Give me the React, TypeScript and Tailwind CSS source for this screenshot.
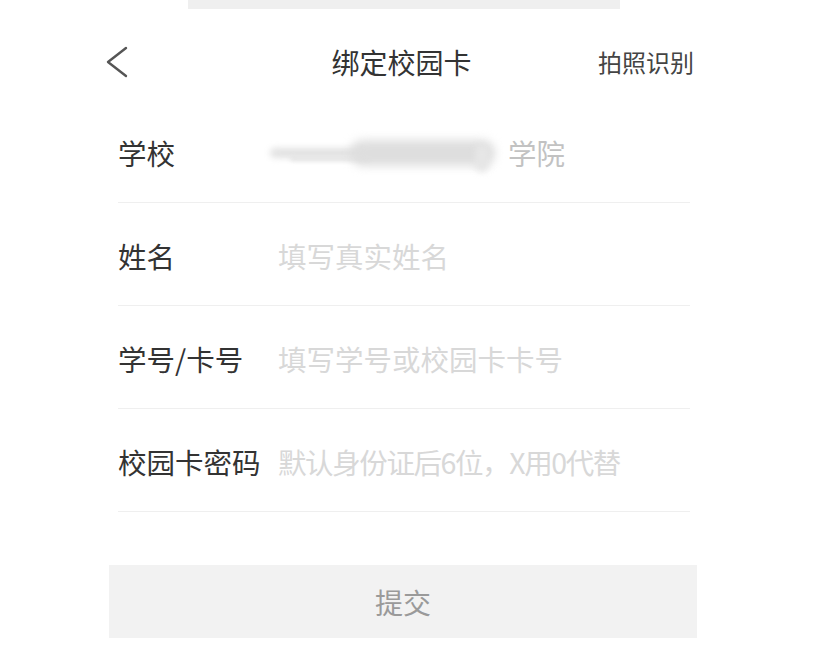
const rows = [
  { label: '学校', placeholder: '', tight: false },
  { label: '姓名', placeholder: '填写真实姓名', tight: false },
  { label: '学号/卡号', placeholder: '填写学号或校园卡卡号', tight: false },
  { label: '校园卡密码', placeholder: '默认身份证后6位，X用0代替', tight: true },
];

function BackArrow() {
  return (
    <svg width="24" height="32" viewBox="0 0 24 32" className="-ml-[1px]">
      <polyline
        points="21,2 3,16 21,30"
        fill="none"
        stroke="#555"
        strokeWidth="2.4"
        strokeLinecap="round"
        strokeLinejoin="round"
      />
    </svg>
  );
}

export default function App() {
  return (
    <div
      className="min-h-[658px] w-[831px] bg-white"
      style={{ fontFamily: '"Noto Sans CJK SC", "Noto Sans", sans-serif' }}
    >
      {/* status strip */}
      <div className="ml-[188px] h-[9px] w-[432px] bg-[#efefef]" />

      <div className="ml-[106px] w-[591px]">
        {/* header */}
        <div className="relative mt-[31px] flex h-[44px] items-center justify-between">
          <BackArrow />
          <h1 className="absolute left-1/2 -translate-x-1/2 text-[28px] text-[#333]">绑定校园卡</h1>
          <span className="mr-[3px] text-[24px] text-[#444]">拍照识别</span>
        </div>

        {/* form */}
        <div className="mt-[16px] pl-[12px] pr-[7px]">
          {rows.map((row, i) => (
            <div
              key={row.label}
              className="flex h-[103px] items-center border-b border-[#efefef] pt-[5px]"
            >
              <span className="w-[160px] shrink-0 text-[28.5px] text-[#333]">{row.label}</span>
              {i === 0 ? (
                <div className="-ml-[8px] flex items-center">
                  {/* redacted school name */}
                  <div className="relative h-[40px] w-[238px]">
                    <div className="absolute left-[0px] top-[14px] h-[10px] w-[110px] rounded-full bg-[#e2e2e2] blur-[3px]" />
                    <div className="absolute left-[20px] top-[22px] h-[5px] w-[80px] rounded-full bg-[#e4e4e4] blur-[2px]" />
                    <div className="absolute left-[80px] top-[6px] h-[26px] w-[145px] rounded-full bg-[#dedede] blur-[5px]" />
                    <div className="absolute left-[205px] top-[10px] h-[28px] w-[14px] rounded-full bg-[#e6e6e6] blur-[3px]" />
                  </div>
                  <span className="text-[28.5px] text-[#c2c2c2]">学院</span>
                </div>
              ) : (
                <span
                  className={
                    row.tight
                      ? 'whitespace-nowrap text-[28.5px] tracking-[-1.4px] text-[#d8d8d8]'
                      : 'whitespace-nowrap text-[28.5px] text-[#d8d8d8]'
                  }
                >
                  {row.placeholder}
                </span>
              )}
            </div>
          ))}
        </div>

        {/* submit */}
        <button className="ml-[3px] mt-[53px] flex h-[73px] w-[588px] items-center justify-center bg-[#f2f2f2] text-[28px] text-[#9a9a9a]">
          提交
        </button>
      </div>
    </div>
  );
}
